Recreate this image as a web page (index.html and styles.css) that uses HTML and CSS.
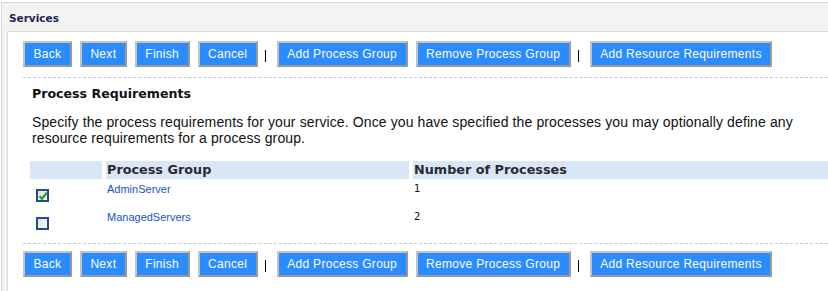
FILE: index.html
```html
<!DOCTYPE html>
<html>
<head>
<meta charset="utf-8">
<link rel="stylesheet" href="styles.css">
</head>
<body>
<div class="frame">
  <div class="title">Services</div>
  <div class="panel">
    <div class="btnrow">
      <span class="btn">Back</span>
      <span class="btn">Next</span>
      <span class="btn">Finish</span>
      <span class="btn">Cancel</span>
      <span class="sep"></span>
      <span class="btn">Add Process Group</span>
      <span class="btn">Remove Process Group</span>
      <span class="sep"></span>
      <span class="btn">Add Resource Requirements</span>
    </div>
    <div class="rule"></div>
    <div class="content">
      <h2 class="heading">Process Requirements</h2>
      <p class="desc">Specify the process requirements for your service. Once you have specified the processes you may optionally define any resource requirements for a process group.</p>
      <div class="grid">
        <div class="th"></div>
        <div class="th">Process Group</div>
        <div class="th">Number of Processes</div>

        <div class="td cb"><span class="box checked"><svg viewBox="0 0 10 10" width="10" height="10"><path d="M1.5 5.2 L4 7.8 L8.8 1.8" fill="none" stroke="#2a9a2a" stroke-width="2.2"/></svg></span></div>
        <div class="td"><a class="link">AdminServer</a></div>
        <div class="td num">1</div>

        <div class="td cb"><span class="box"></span></div>
        <div class="td"><a class="link">ManagedServers</a></div>
        <div class="td num">2</div>
      </div>
    </div>
    <div class="rule rule2"></div>
    <div class="btnrow bottom">
      <span class="btn">Back</span>
      <span class="btn">Next</span>
      <span class="btn">Finish</span>
      <span class="btn">Cancel</span>
      <span class="sep"></span>
      <span class="btn">Add Process Group</span>
      <span class="btn">Remove Process Group</span>
      <span class="sep"></span>
      <span class="btn">Add Resource Requirements</span>
    </div>
  </div>
</div>
</body>
</html>
```
FILE: styles.css
```css
html, body {
  margin: 0;
  padding: 0;
  background: #ffffff;
  overflow: hidden;
}
body {
  width: 828px;
  height: 291px;
  font-family: "Liberation Sans", Arial, sans-serif;
}
.frame {
  box-sizing: border-box;
  margin: 2px 0 0 1px;
  height: 289px;
  border-top: 1px solid #d6d6d6;
  border-left: 1px solid #d6d6d6;
  background: #f3f3f3;
  padding: 0 0 0 5px;
  display: flex;
  flex-direction: column;
}
.title {
  font-family: "DejaVu Sans", Verdana, sans-serif;
  font-weight: bold;
  font-size: 10.5px;
  color: #1c2850;
  height: 28px;
  line-height: 30px;
  padding-left: 2px;
}
.panel {
  flex: 1;
  background: #ffffff;
  border-top: 1px solid #dcdcdc;
  border-left: 1px solid #dcdcdc;
  padding-left: 15px;
  overflow: hidden;
}
.btnrow {
  display: flex;
  align-items: center;
  gap: 8px;
  padding-top: 9px;
  white-space: nowrap;
}
.btnrow.bottom {
  padding-top: 7px;
}
.btn {
  display: inline-block;
  box-sizing: border-box;
  height: 26px;
  line-height: 22px;
  padding: 0 8.5px;
  background: #2a8cff;
  color: #ffffff;
  font-size: 12px;
  letter-spacing: 0.3px;
  border: 2px solid #b3b3b3;
  border-top-color: #c4c4c4;
  border-left-color: #c4c4c4;
  border-right-color: #9a9a9a;
  border-bottom-color: #9a9a9a;
}
.sep {
  display: inline-block;
  width: 1px;
  height: 12px;
  background: #000;
  margin: 4px 3px 0 -1px;
}
.rule {
  margin-top: 10px;
  border-top: 1px dashed #c8c8c8;
  width: 100%;
}
.rule2 {
  margin-top: 8px;
}
.content {
  padding-left: 9px;
}
.heading {
  margin: 0;
  padding-top: 8px;
  font-family: "DejaVu Sans", Verdana, sans-serif;
  font-weight: bold;
  font-size: 12.6px;
  color: #111;
  line-height: 16px;
}
.desc {
  margin: 12px 0 0 0;
  font-size: 14px;
  letter-spacing: 0.11px;
  line-height: 16px;
  color: #111;
  width: 790px;
}
.grid {
  display: grid;
  grid-template-columns: 72px 303px 1fr;
  column-gap: 4px;
  margin: 15px 0 0 -2px;
}
.th {
  height: 18px;
  line-height: 18px;
  background: #d8e6f8;
  font-family: "DejaVu Sans", Verdana, sans-serif;
  font-weight: bold;
  font-size: 12.8px;
  color: #2b2b2b;
  padding-left: 1px;
}
.td {
  height: 28px;
  font-size: 11px;
  padding-top: 4px;
  box-sizing: border-box;
}
.td.cb {
  padding: 10px 0 0 6px;
}
.box {
  display: block;
  width: 9px;
  height: 9px;
  border: 2px solid #1d4f8c;
  background: linear-gradient(135deg, #e0e0e0, #fafafa);
  position: relative;
}
.box svg {
  position: absolute;
  left: 0;
  top: 0;
}
.link {
  color: #1555c8;
  font-size: 11px;
  font-family: "Liberation Sans", Arial, sans-serif;
  padding-left: 1px;
}
.num {
  color: #111;
  font-size: 10px;
  font-family: "DejaVu Sans", Verdana, sans-serif;
  padding-left: 1px;
}
```
